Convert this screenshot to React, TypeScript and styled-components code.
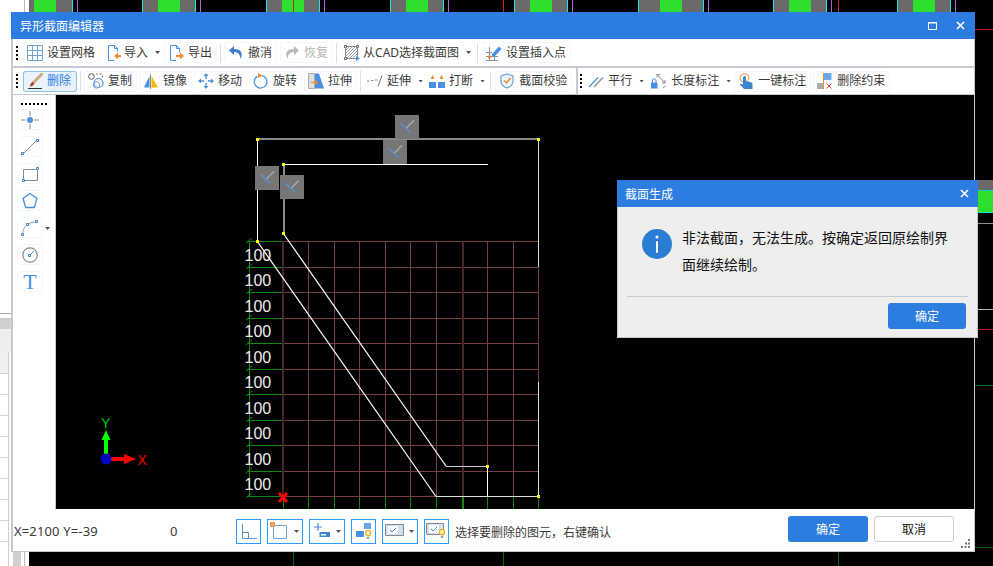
import { FC, ReactNode } from "react";
import styled, { createGlobalStyle } from "styled-components";

const BLUE = "#4a90e2";
const STEEL = "#6ea3d8";
const GREY = "#858d94";
const ORANGE = "#f08a30";

/* ---------- toolbar icons ---------- */

const GridIcon = () => (
  <Glyph viewBox="0 0 16 16">
    <path d="M.5.5h15v15H.5zM5.5.5v15M10.5.5v15M.5 5.5h15M.5 10.5h15" fill="none" stroke={STEEL} />
  </Glyph>
);
const ImportIcon = () => (
  <Glyph viewBox="0 0 16 16">
    <path d="M2.5.5h6l3 3v3M8 15.5H2.5V.5M8.5.5v3h3" fill="none" stroke={BLUE} />
    <path d="M8 11l4-3.5V10h3v2h-3v2.5z" fill={ORANGE} />
  </Glyph>
);
const ExportIcon = () => (
  <Glyph viewBox="0 0 16 16">
    <path d="M2.5.5h6l3 3v4M8 15.5H2.5V.5M8.5.5v3h3" fill="none" stroke={BLUE} />
    <path d="M16 11l-4-3.5V10H8v2h4v2.5z" fill={ORANGE} />
  </Glyph>
);
const UndoIcon = () => (
  <Glyph viewBox="0 0 16 16">
    <path d="M6 1L1 5.5 6 10V7c4 0 6 2 6.5 7C15.5 8 13 4 6 4z" fill="#3f7fc7" />
  </Glyph>
);
const RedoIcon = () => (
  <Glyph viewBox="0 0 16 16">
    <path d="M10 1l5 4.5L10 10V7c-4 0-6 2-6.5 7C.5 8 3 4 10 4z" fill="#b9b9b9" />
  </Glyph>
);
const CadIcon = () => (
  <Glyph viewBox="0 0 16 16">
    <path d="M2 5l3-3M2 8l6-6M2 11l9-9M2 14L14 2M5 14l9-9M8 14l6-6M11 14l3-3" stroke="#9aa0a6" fill="none" />
    <path d="M1.5 1.5h12v12h-12z" fill="none" stroke={GREY} />
    <path d="M.5.5h2v2h-2zM12.5.5h2v2h-2zM.5 12.5h2v2h-2z" fill="#fff" stroke="#5d666e" />
    <path d="M12 11l4 2.5-4 2.5z" fill={BLUE} />
  </Glyph>
);
const InsertIcon = () => (
  <Glyph viewBox="0 0 16 16">
    <path d="M3.5 2v14M8.5 7v9M0 7.5h6M0 11.5h12M0 15.5h12" stroke={GREY} fill="none" />
    <path d="M6 9L13 1.5l2.5 2.5L9 11l-3 1z" fill={BLUE} />
    <circle cx="3.5" cy="12" r="1.7" fill={ORANGE} />
  </Glyph>
);
const BrushIcon = () => (
  <Glyph viewBox="0 0 16 16">
    <path d="M15 1L7.5 8.5" stroke="#d0ab78" strokeWidth="3" strokeLinecap="round" fill="none" />
    <path d="M5.5 8.5l2 2c-.8 2-2.5 3-5 3 1.2-1.5 1-3.5 3-5z" fill="#b5431f" />
    <path d="M1 15.5h14" stroke="#333" fill="none" />
  </Glyph>
);
const CopyIcon = () => (
  <Glyph viewBox="0 0 16 16">
    <circle cx="3.5" cy="3.5" r="2.8" fill="none" stroke="#555" />
    <path d="M8 1h2M11.5 1h2M14.5 2.5v2" stroke="#777" fill="none" />
    <circle cx="10.5" cy="10" r="4.5" fill="none" stroke={BLUE} strokeWidth="1.2" />
    <circle cx="8.5" cy="12" r="3.2" fill="none" stroke={STEEL} />
  </Glyph>
);
const MirrorIcon = () => (
  <Glyph viewBox="0 0 16 16">
    <path d="M1 14.5L6.5 3v11.5z" fill={BLUE} />
    <path d="M7.5 1v15" stroke="#8a8a8a" fill="none" />
    <path d="M8.5 14.5V3L15 14.5z" fill="#f7b500" />
  </Glyph>
);
const MoveIcon = () => (
  <Glyph viewBox="0 0 16 16">
    <path d="M8 0l2.5 3h-5zM8 16l2.5-3h-5zM0 8l3-2.5v5zM16 8l-3-2.5v5z" fill={BLUE} />
    <path d="M8 3v3M8 10v3M3 8h3M10 8h3" stroke={BLUE} strokeWidth="1.4" fill="none" />
  </Glyph>
);
const RotateIcon = () => (
  <Glyph viewBox="0 0 16 16">
    <path d="M9 2.6a6.3 6.3 0 1 1-4.8.8" fill="none" stroke={BLUE} strokeWidth="1.3" />
    <path d="M5 0l4.5 2.5L5 5z" fill={ORANGE} />
  </Glyph>
);
const StretchIcon = () => (
  <Glyph viewBox="0 0 16 16">
    <path d="M.5.5h6v15h-6z" fill="#dde0e3" stroke="#a8adb2" />
    <path d="M7 .5h4l5 15H7z" fill={BLUE} />
    <path d="M3 9.5h6M7 7.5l3 2-3 2z" stroke={ORANGE} fill={ORANGE} />
  </Glyph>
);
const ExtendIcon = () => (
  <Glyph viewBox="0 0 16 16">
    <path d="M0 8h2.5M4 7.5h2.5M8 7h2.5" stroke={GREY} fill="none" />
    <path d="M11 13.5L15 2.5" stroke="#5b7f9f" fill="none" />
  </Glyph>
);
const BreakIcon = () => (
  <Glyph viewBox="0 0 16 16">
    <path d="M0 9h7v6H0zM9 9h7v6H9z" fill={BLUE} />
    <path d="M3.5 2L1.5 6h4zM12.5 2l-2 4h4z" fill={ORANGE} />
  </Glyph>
);
const ShieldIcon = () => (
  <Glyph viewBox="0 0 16 16">
    <path d="M8 1l6 2v5c0 3.5-3 6-6 7-3-1-6-3.5-6-7V3z" fill="#eef5fc" stroke={STEEL} strokeWidth="1.2" />
    <path d="M5 7.5l2.5 2.5L11.5 5" fill="none" stroke={ORANGE} strokeWidth="1.5" />
  </Glyph>
);
const ParallelIcon = () => (
  <Glyph viewBox="0 0 16 16">
    <path d="M1 14L10 4.5" stroke={BLUE} strokeWidth="1.2" fill="none" />
    <path d="M6 14l9-9.5" stroke={GREY} strokeWidth="1.2" fill="none" />
  </Glyph>
);
const LengthIcon = () => (
  <Glyph viewBox="0 0 16 16">
    <path d="M1 9.5h6.5v6H1z" fill={BLUE} />
    <path d="M2.5 9.5V7a1.8 1.8 0 0 1 3.5 0v2.5" fill="none" stroke={BLUE} />
    <path d="M7 1.5l8 8.5M7 1.5h3M7 1.5v3M15 10h-3M15 10V7" fill="none" stroke={GREY} />
    <path d="M13 15l2.5-2" stroke={GREY} fill="none" />
  </Glyph>
);
const HandIcon = () => (
  <Glyph viewBox="0 0 16 16">
    <circle cx="6.5" cy="5" r="4.2" fill="none" stroke="#f2a36b" strokeWidth="1.3" />
    <path d="M5 4.5a1.5 1.5 0 0 1 3 0V8l5 1.2c1 .3 1.5 1 1.5 2V16H6l-4-4.5 1-1 2 1.2z" fill="#3d86cf" />
  </Glyph>
);
const ClearIcon = () => (
  <Glyph viewBox="0 0 16 16">
    <path d="M7 0h7.5v7H7z" fill="#6aa7e8" />
    <path d="M6.5 0v16" stroke={ORANGE} fill="none" />
    <path d="M0 10h6v6H0z" fill="#a9adb2" />
    <path d="M9.5 10.5l5 5M14.5 10.5l-5 5" stroke="#e0453a" fill="none" />
  </Glyph>
);

/* ---------- side panel icons ---------- */

const PointTool = () => (
  <PanelGlyph viewBox="0 0 20 20">
    <path d="M10 1v5M10 14v5M1 10h5M14 10h5" stroke={GREY} fill="none" />
    <circle cx="10" cy="10" r="3" fill={BLUE} />
  </PanelGlyph>
);
const LineTool = () => (
  <PanelGlyph viewBox="0 0 20 20">
    <path d="M3 17L17 3" stroke={GREY} fill="none" />
    <path d="M1.5 15.5h2v2h-2zM16.5 2.5h2v2h-2z" fill="#fff" stroke="#3d86cf" />
  </PanelGlyph>
);
const RectTool = () => (
  <PanelGlyph viewBox="0 0 20 20">
    <path d="M3.5 5.5h14v11h-14z" fill="none" stroke={GREY} />
    <path d="M16.5 3.5h2v2h-2zM2.5 15.5h2v2h-2z" fill="#fff" stroke="#3d86cf" />
  </PanelGlyph>
);
const PentagonTool = () => (
  <PanelGlyph viewBox="0 0 20 20">
    <path d="M10 2.5l7 5-2.7 9H5.7l-2.7-9z" fill="none" stroke={BLUE} strokeWidth="1.3" />
  </PanelGlyph>
);
const ArcTool = () => (
  <PanelGlyph viewBox="0 0 20 20">
    <path d="M2.5 16C3 11 5 8 8 6c3-1.5 5-2 8-2" fill="none" stroke="#9aa0a6" />
    <path d="M1.5 15.5h2v2h-2zM6.5 5.5h2v2h-2zM15.5 2.5h2v2h-2z" fill="#fff" stroke="#3d86cf" />
  </PanelGlyph>
);
const CircleTool = () => (
  <PanelGlyph viewBox="0 0 20 20">
    <circle cx="10" cy="10" r="7.2" fill="none" stroke={GREY} strokeWidth="1.2" />
    <path d="M10 10l4-4" stroke={BLUE} fill="none" />
    <path d="M8.5 9.5h2v2h-2z" fill="#fff" stroke="#3d86cf" />
  </PanelGlyph>
);

/* ---------- status bar icons ---------- */

const Bulb = ({ x, y }: { x: number; y: number }) => (
  <g transform={`translate(${x} ${y})`}>
    <circle cx="3" cy="3" r="2.6" fill="#fff3b0" stroke="#e0b020" strokeWidth="1.2" />
    <path d="M1.8 6.5h2.4V9H1.8z" fill="#9aa0a6" />
  </g>
);
const OrthoIcon = () => (
  <StatusGlyph viewBox="0 0 23 23">
    <path d="M5.5 4v14.5H20M5.5 12.5h6v6" fill="none" stroke="#5b8fc4" />
  </StatusGlyph>
);
const SnapIcon = () => (
  <StatusGlyph viewBox="0 0 23 23">
    <path d="M5.5 5.5h13v13h-13z" fill="none" stroke={STEEL} />
    <path d="M2.5 2.5h4v4h-4z" fill="#f5a869" stroke="#e98c3c" />
  </StatusGlyph>
);
const PlusIcon = () => (
  <StatusGlyph viewBox="0 0 23 23">
    <path d="M8 3v8M4 7h8" stroke={BLUE} strokeWidth="1.2" fill="none" />
    <path d="M9.5 12H20v5H9.5z" fill="#3d86cf" />
    <path d="M11 14h5v1.5h-5z" fill="#fff" />
  </StatusGlyph>
);
const FlagIcon = () => (
  <StatusGlyph viewBox="0 0 23 23">
    <path d="M12 3h7v6h-7z" fill="#6aa7e8" />
    <path d="M4 11h8V3v14H4z" fill={BLUE} />
    <Bulb x={13} y={10} />
  </StatusGlyph>
);
const CardIcon = () => (
  <StatusGlyph viewBox="0 0 23 23">
    <path d="M2.5 4.5h18v11h-18z" fill="#cfe0f4" stroke={GREY} />
    <path d="M5 6h10v8H5z" fill="#fff" />
    <path d="M7 10l2 2 4-4" fill="none" stroke="#3d86cf" />
  </StatusGlyph>
);
const CardBulbIcon = () => (
  <StatusGlyph viewBox="0 0 23 23">
    <path d="M1.5 3.5h17v11h-17z" fill="#cfe0f4" stroke={GREY} />
    <path d="M4 5h10v8H4z" fill="#fff" />
    <path d="M6 9l2 2 4-4" fill="none" stroke="#3d86cf" />
    <Bulb x={14} y={9} />
  </StatusGlyph>
);

/* ---------- data ---------- */

type Item =
  | { sep: true; ml?: number; mr?: number }
  | { label: string; icon: ReactNode; caret?: boolean; active?: boolean; muted?: boolean; gap?: number; mr?: number };

const topTools: Item[] = [
  { label: "设置网格", icon: <GridIcon /> },
  { label: "导入", icon: <ImportIcon />, caret: true, gap: 2 },
  { label: "导出", icon: <ExportIcon /> },
  { sep: true, ml: 1, mr: 1 },
  { label: "撤消", icon: <UndoIcon />, mr: 1 },
  { label: "恢复", icon: <RedoIcon />, muted: true },
  { sep: true, ml: 1, mr: 1 },
  { label: "从CAD选择截面图", icon: <CadIcon />, caret: true, gap: 3 },
  { sep: true, ml: 2, mr: 2 },
  { label: "设置插入点", icon: <InsertIcon /> },
];

const editTools: Item[] = [
  { label: "删除", icon: <BrushIcon />, active: true },
  { sep: true, ml: 1, mr: 1 },
  { label: "复制", icon: <CopyIcon /> },
  { label: "镜像", icon: <MirrorIcon /> },
  { label: "移动", icon: <MoveIcon /> },
  { label: "旋转", icon: <RotateIcon /> },
  { label: "拉伸", icon: <StretchIcon /> },
  { sep: true, ml: 1 },
  { label: "延伸", icon: <ExtendIcon />, caret: true, mr: -2 },
  { label: "打断", icon: <BreakIcon />, caret: true },
  { sep: true, ml: 1, mr: 2 },
  { label: "截面校验", icon: <ShieldIcon /> },
];

const constraintTools: Item[] = [
  { label: "平行", icon: <ParallelIcon />, caret: true, mr: -2 },
  { label: "长度标注", icon: <LengthIcon />, caret: true, gap: 5, mr: -1 },
  { label: "一键标注", icon: <HandIcon /> },
  { label: "删除约束", icon: <ClearIcon /> },
];

const gridX = [283, 308, 334, 359, 385, 410, 436, 462, 487, 513, 538];
const gridY = [241, 267, 292, 318, 343, 369, 394, 420, 445, 471, 496];
const labelY = [261, 286, 312, 337, 363, 388, 414, 439, 465, 490];
const vertices = [
  [257, 139],
  [538, 139],
  [283, 164],
  [283, 233],
  [257, 241],
  [487, 466],
  [538, 496],
];
const badges = [
  [395, 115],
  [383, 140],
  [255, 166],
  [280, 175],
];
// cyan start of each stripe block behind the window, and its grey width
const stripes = [
  [142, 16],
  [266, 16],
  [390, 16],
  [514, 16],
  [638, 22],
  [773, 16],
  [897, 16],
];

const ToolRow: FC<{ items: Item[] }> = ({ items }) => (
  <>
    {items.map((item, i) =>
      "sep" in item ? (
        <Separator key={i} $ml={item.ml} $mr={item.mr} />
      ) : (
        <ToolButton key={i} $active={item.active} $muted={item.muted} $gap={item.gap} $mr={item.mr} $caret={item.caret}>
          {item.icon}
          <span>{item.label}</span>
          {item.caret && <Caret $ml={7 - (item.gap ?? 4)} />}
        </ToolButton>
      ),
    )}
  </>
);

const Backdrop = () => (
  <BackdropArt viewBox="0 0 993 566">
    <rect x="0" y="0" width="29" height="566" fill="#fff" />
    <path d="M24.5 0v12M24.5 552v14" stroke="#bbb" />
    <rect x="0" y="313" width="11" height="1" fill="#aaa" />
    <rect x="0" y="318" width="11" height="11" fill="#d0d0d0" />
    <rect x="0" y="329" width="11" height="23" fill="#eee" />
    <rect x="0" y="352" width="8" height="21" fill="#f0f0f0" />
    <path d="M8.5 352v214" stroke="#ccc" />
    {[373, 394, 415, 436, 457, 478, 499, 520, 541].map((y) => (
      <rect key={y} x="0" y={y} width="8" height="1" fill="#d4d4d4" />
    ))}
    <rect x="13" y="552" width="8" height="14" fill="#cfcfcf" />
    {stripes.map(([x, w]) => (
      <g key={x}>
        <rect x={x} y="0" width="1" height="12" fill="#19e6e6" />
        <rect x={x + 1} y="0" width={w - 1} height="12" fill="#6a6a6a" />
        <rect x={x + w} y="0" width="22" height="12" fill="#2ce02c" />
        <rect x={x + w + 22} y="0" width={w - 1} height="12" fill="#6a6a6a" />
        <rect x={x + w * 2 + 21} y="0" width="1" height="12" fill="#19e6e6" />
        <rect x={x + w * 2 + 26} y="0" width="1" height="12" fill="#b060d0" />
      </g>
    ))}
    <rect x="29" y="0" width="5" height="12" fill="#6a6a6a" />
    <rect x="34" y="0" width="22" height="12" fill="#2ce02c" />
    <rect x="56" y="0" width="16" height="12" fill="#6a6a6a" />
    <rect x="72" y="0" width="1" height="12" fill="#19e6e6" />
    <rect x="77" y="0" width="1" height="12" fill="#b060d0" />
    <rect x="293" y="0" width="1" height="12" fill="#d02020" />
    <rect x="503" y="0" width="1" height="12" fill="#d02020" />
    <rect x="838" y="0" width="1" height="12" fill="#d02020" />
    <rect x="975" y="29" width="18" height="1" fill="#c01818" />
    <rect x="978" y="180" width="15" height="11" fill="#6a6a6a" />
    <rect x="978" y="190" width="15" height="1" fill="#19c8c8" />
    <rect x="978" y="191" width="15" height="21" fill="#2ce02c" />
    <rect x="978" y="212" width="15" height="1" fill="#19e6e6" />
    <rect x="978" y="223" width="15" height="1" fill="#8a8a8a" />
    <rect x="978" y="309" width="15" height="1" fill="#b0b0b0" />
    <rect x="978" y="329" width="15" height="1" fill="#c01818" />
    <rect x="975" y="385" width="18" height="1" fill="#0a6a0a" />
    <rect x="975" y="547" width="18" height="1" fill="#0a6a0a" />
    {[293, 503, 838].map((x) => (
      <rect key={x} x={x} y="552" width="1" height="14" fill="#0a6a0a" />
    ))}
  </BackdropArt>
);

const CadDrawing = () => (
  <CadCanvas viewBox="56 95 918 414" shapeRendering="crispEdges">
    {gridY.map((y) => (
      <g key={y}>
        <rect x="283" y={y} width="255" height="1" fill="#773c40" />
        <rect x="247" y={y} width="36" height="1" fill="#0f8a0f" />
        <path d={`M246 ${y + 2}l6-5`} stroke="#0f8a0f" fill="none" shapeRendering="auto" />
      </g>
    ))}
    {gridX.map((x, i) => (
      <g key={x}>
        <rect x={i === 0 ? x - 1 : x} y="241" width={i === 0 || i === 7 ? 2 : 1} height="255" fill={i === 0 || i === 7 ? "#4b2528" : "#773c40"} />
        <rect x={x} y="497" width={i === 7 ? 2 : 1} height="12" fill="#0f8a0f" />
      </g>
    ))}
    <rect x="249" y="241" width="1" height="255" fill="#0f8a0f" />

    <rect x="257" y="138" width="281" height="2" fill="#8a8a8a" />
    <rect x="257" y="139" width="1" height="102" fill="#fff" />
    <rect x="538" y="139" width="1" height="128" fill="#d8d8d8" />
    <rect x="538" y="382" width="1" height="114" fill="#d8d8d8" />
    <rect x="436" y="496" width="102" height="1" fill="#dcdcdc" />
    <rect x="283" y="164" width="205" height="1" fill="#fff" />
    <rect x="283" y="164" width="2" height="69" fill="#8a8a8a" />
    <rect x="446" y="466" width="41" height="1" fill="#d0d0d0" />
    <rect x="487" y="466" width="1" height="30" fill="#fff" />
    <path d="M257 241L436 496.5M283 233L446 466" stroke="#f2f2f2" strokeWidth="1.3" fill="none" shapeRendering="auto" />

    {labelY.map((y) => (
      <Dimension key={y} x="244.5" y={y}>
        100
      </Dimension>
    ))}

    {badges.map(([x, y]) => (
      <g key={`${x}-${y}`} transform={`translate(${x} ${y})`} shapeRendering="auto">
        <rect width="24" height="24" fill="#767676" />
        <path d="M11.3 13.3L19 5.3" stroke="#a9a9a9" strokeWidth="1.3" fill="none" />
        <path d="M5.7 8.3l9.3 9" stroke="#5a93d6" strokeWidth="1.5" fill="none" />
      </g>
    ))}
    {vertices.map(([x, y]) => (
      <rect key={`${x}-${y}`} x={x - 1} y={y - 1} width="3" height="3" fill="#ffff00" />
    ))}

    <g shapeRendering="auto">
      <path d="M279 493l8 9M287 493l-8 9" stroke="#ff0000" strokeWidth="3" fill="none" />
      <path d="M104 455v-15h-2.5l4.5-10 4.5 10H108v15z" fill="#00ff00" />
      <path d="M110 457h14v-3l12 5-12 5v-3h-14z" fill="#ff0000" />
      <circle cx="106" cy="459" r="5.5" fill="#0000c0" />
    </g>
    <AxisLabel x="101" y="428" fill="#00d000">
      Y
    </AxisLabel>
    <AxisLabel x="137.5" y="465" fill="#ff0000">
      X
    </AxisLabel>
  </CadCanvas>
);

const App: FC = () => {
  return (
    <Desktop>
      <GlobalStyle />
      <Backdrop />

      <EditorWindow>
        <TitleBar>
          <span>异形截面编辑器</span>
          <WindowButtons>
            <svg width="9" height="8" viewBox="0 0 9 8">
              <path d="M.5 1h8v6.5h-8z" fill="none" stroke="#fff" />
              <path d="M0 .5h9" stroke="#fff" />
            </svg>
            <svg width="9" height="9" viewBox="0 0 9 9">
              <path d="M1 1l7 7M8 1L1 8" stroke="#fff" strokeWidth="1.6" />
            </svg>
          </WindowButtons>
        </TitleBar>

        <Frame>
          <TopToolbar>
            <Grip />
            <ToolRow items={topTools} />
          </TopToolbar>
          <EditToolbar>
            <Grip />
            <ToolRow items={editTools} />
            <ToolbarBreak />
            <InnerGrip />
            <ToolRow items={constraintTools} />
          </EditToolbar>

          <Workspace>
            <SidePanel>
              <PanelGrip />
              <PanelTool><PointTool /></PanelTool>
              <PanelTool><LineTool /></PanelTool>
              <PanelTool><RectTool /></PanelTool>
              <PanelTool><PentagonTool /></PanelTool>
              <PanelTool>
                <ArcTool />
                <PanelCaret />
              </PanelTool>
              <PanelTool><CircleTool /></PanelTool>
              <PanelTool><TextTool>T</TextTool></PanelTool>
            </SidePanel>
            <CadDrawing />
          </Workspace>

          <StatusBar>
            <Coords>X=2100 Y=-39</Coords>
            <AngleValue>0</AngleValue>
            <SnapGroup>
              <SnapButton><OrthoIcon /></SnapButton>
              <SnapButton $caret><SnapIcon /><Caret /></SnapButton>
              <SnapButton $caret><PlusIcon /><Caret /></SnapButton>
              <SnapButton><FlagIcon /></SnapButton>
              <SnapButton $caret><CardIcon /><Caret /></SnapButton>
              <SnapButton><CardBulbIcon /></SnapButton>
            </SnapGroup>
            <Hint>选择要删除的图元，右键确认</Hint>
            <Actions>
              <PrimaryButton>确定</PrimaryButton>
              <PlainButton>取消</PlainButton>
            </Actions>
            <ResizeGrip viewBox="0 0 10 9" width="10" height="9">
              <path d="M7 0h2v2H7zM4 3.5h2v2H4zM7 3.5h2v2H7zM0 7h2v2H0zM3.5 7h2v2h-2zM7 7h2v2H7z" fill="#777" />
            </ResizeGrip>
          </StatusBar>
        </Frame>
      </EditorWindow>

      <MessageDialog>
        <DialogTitle>
          <span>截面生成</span>
          <svg width="9" height="9" viewBox="0 0 9 9">
            <path d="M1 1l7 7M8 1L1 8" stroke="#fff" strokeWidth="1.6" />
          </svg>
        </DialogTitle>
        <DialogBody>
          <InfoBadge>
            <svg width="4" height="18" viewBox="0 0 4 18">
              <circle cx="2" cy="2" r="1.5" fill="#fff" />
              <rect x="1" y="6" width="2" height="12" rx="1" fill="#fff" />
            </svg>
          </InfoBadge>
          <Message>非法截面，无法生成。按确定返回原绘制界面继续绘制。</Message>
        </DialogBody>
        <DialogFooter>
          <DialogButton>确定</DialogButton>
        </DialogFooter>
      </MessageDialog>
    </Desktop>
  );
};

export default App;

const GlobalStyle = createGlobalStyle`
  html, body {
    margin: 0;
    height: 100%;
    background: #000;
    overflow: hidden;
  }
  * {
    box-sizing: border-box;
  }
`;

const Desktop = styled.div`
  position: relative;
  width: 993px;
  height: 566px;
  background: #000;
  overflow: hidden;
  font-family: "Noto Sans", "Noto Sans CJK SC", sans-serif;
  font-size: 12px;
  color: #3a3a3a;
`;

const BackdropArt = styled.svg`
  position: absolute;
  inset: 0;
  width: 993px;
  height: 566px;
`;

const EditorWindow = styled.section`
  position: absolute;
  left: 11px;
  top: 12px;
  width: 964px;
  height: 540px;
  display: flex;
  flex-direction: column;
`;

const TitleBar = styled.header`
  height: 27px;
  flex: none;
  display: flex;
  align-items: center;
  justify-content: space-between;
  padding: 0 10px 0 9px;
  background: #2d7de0;
  color: #fff;
  font-size: 12px;
`;

const WindowButtons = styled.div`
  display: flex;
  align-items: center;
  gap: 19px;
`;

const Frame = styled.div`
  flex: 1;
  min-height: 0;
  display: flex;
  flex-direction: column;
  border-left: 2px solid #c5c9d3;
  border-right: 1px solid #c5c9d3;
  border-bottom: 1px solid #c5c9d3;
  background: #fff;
`;

const Toolbar = styled.div`
  flex: none;
  display: flex;
  align-items: center;
  gap: 2px;
  padding-left: 3px;
  background: #fff;
`;

const TopToolbar = styled(Toolbar)`
  height: 29px;
  border-bottom: 2px solid #c5c9d3;
`;

const EditToolbar = styled(Toolbar)`
  height: 27px;
  border-bottom: 1px solid #c5c9d3;
`;

const Grip = styled.i`
  flex: none;
  width: 2px;
  height: 14px;
  margin-right: 3px;
  background: repeating-linear-gradient(to bottom, #000 0 2px, transparent 2px 4px);
`;

const InnerGrip = styled(Grip)`
  margin-right: 0;
`;

const ToolbarBreak = styled.i`
  flex: none;
  align-self: stretch;
  width: 2px;
  margin-left: 2px;
  background: #c5c9d3;
`;

const Separator = styled.i<{ $ml?: number; $mr?: number }>`
  flex: none;
  width: 1px;
  height: 20px;
  margin-left: ${(p) => p.$ml ?? 0}px;
  margin-right: ${(p) => p.$mr ?? 0}px;
  background: #dcdfe4;
`;

const buttonPadding = (p: { $active?: boolean; $caret?: boolean }) => {
  if (p.$active) return 6;
  return p.$caret ? 2 : 5;
};

const ToolButton = styled.div<{ $active?: boolean; $muted?: boolean; $gap?: number; $mr?: number; $caret?: boolean }>`
  flex: none;
  height: 21px;
  display: flex;
  align-items: center;
  gap: ${(p) => p.$gap ?? 4}px;
  padding: 0 ${buttonPadding}px 0 4px;
  margin-right: ${(p) => p.$mr ?? 0}px;
  border-radius: 3px;
  box-shadow: inset 0 0 0 1px ${(p) => (p.$active ? "#8fc0ee" : p.$caret ? "transparent" : "#f6f6f6")};
  background: ${(p) => (p.$active ? "#e8f2fc" : "#fff")};
  color: ${(p) => (p.$active ? "#2d7de0" : p.$muted ? "#b5b5b5" : "#3a3a3a")};
  line-height: 1;
  white-space: nowrap;
`;

const Glyph = styled.svg`
  flex: none;
  width: 16px;
  height: 16px;
`;

const Caret = styled.i<{ $ml?: number }>`
  flex: none;
  width: 5px;
  height: 3px;
  margin-left: ${(p) => p.$ml ?? 3}px;
  background: #555;
  clip-path: polygon(0 0, 100% 0, 50% 100%);
`;

const Workspace = styled.div`
  flex: 1;
  min-height: 0;
  display: flex;
`;

const SidePanel = styled.aside`
  flex: none;
  width: 43px;
  display: flex;
  flex-direction: column;
  align-items: flex-start;
  gap: 6px;
  padding: 8px 0 0 4px;
  background: #fff;
  border-right: 1px solid #c5c9d3;
`;

const PanelGrip = styled.i`
  width: 26px;
  height: 2px;
  margin: 0 0 -2px 4px;
  background: repeating-linear-gradient(to right, #000 0 2px, transparent 2px 4px);
`;

const PanelTool = styled.div`
  position: relative;
  width: 26px;
  height: 21px;
  display: flex;
  align-items: center;
  justify-content: center;
  border: 1px solid #f6f6f6;
  border-radius: 3px;
`;

const PanelGlyph = styled.svg`
  width: 20px;
  height: 20px;
`;

const PanelCaret = styled(Caret)`
  position: absolute;
  left: 27px;
  top: 9px;
  margin: 0;
`;

const TextTool = styled.span`
  font-family: "Liberation Serif", serif;
  font-size: 22px;
  line-height: 1;
  color: ${BLUE};
`;

const CadCanvas = styled.svg`
  flex: 1;
  min-width: 0;
  width: 918px;
  height: 414px;
  background: #000;
`;

const Dimension = styled.text`
  font-family: "Liberation Sans", sans-serif;
  font-size: 16px;
  fill: #ececec;
  shape-rendering: auto;
`;

const AxisLabel = styled.text`
  font-family: "Liberation Sans", sans-serif;
  font-size: 14px;
`;

const StatusBar = styled.footer`
  position: relative;
  flex: none;
  height: 41px;
  display: flex;
  align-items: center;
  background: #fff;
`;

const Coords = styled.span`
  flex: none;
  width: 157px;
  margin-top: 1px;
  padding-left: 1px;
  font-size: 13px;
  letter-spacing: 0.15px;
  white-space: nowrap;
`;

const AngleValue = styled.span`
  flex: none;
  width: 66px;
  margin-top: 1px;
  font-size: 13px;
`;

const SnapGroup = styled.div`
  display: flex;
  gap: 6px;
  margin-top: 2px;
`;

const SnapButton = styled.div<{ $caret?: boolean }>`
  width: ${(p) => (p.$caret ? 36 : 25)}px;
  height: 25px;
  display: flex;
  align-items: center;
  border: 1px solid #2e9bff;
  background: #fff;
`;

const StatusGlyph = styled.svg`
  flex: none;
  width: 23px;
  height: 23px;
`;

const Hint = styled.span`
  margin-left: 6px;
  margin-top: 2px;
  white-space: nowrap;
`;

const Actions = styled.div`
  margin-left: auto;
  margin-right: 20px;
  margin-bottom: 3px;
  display: flex;
  gap: 6px;
`;

const PrimaryButton = styled.div`
  width: 80px;
  height: 26px;
  display: flex;
  align-items: center;
  justify-content: center;
  border-radius: 3px;
  background: #2d7de0;
  color: #fff;
`;

const PlainButton = styled(PrimaryButton)`
  background: #fff;
  border: 1px solid #cccccc;
  color: #111;
`;

const ResizeGrip = styled.svg`
  position: absolute;
  right: 3px;
  bottom: 3px;
`;

const MessageDialog = styled.section`
  position: absolute;
  left: 617px;
  top: 180px;
  width: 361px;
  height: 158px;
  display: flex;
  flex-direction: column;
  background: #eeeeee;
  border: 1px solid #c5c9d3;
  border-top: 0;
`;

const DialogTitle = styled.header`
  flex: none;
  height: 27px;
  display: flex;
  align-items: center;
  justify-content: space-between;
  margin: 0 -1px;
  padding: 0 9px 0 8px;
  background: #2d7de0;
  color: #fff;
`;

const DialogBody = styled.div`
  flex: none;
  height: 90px;
  display: flex;
  align-items: flex-start;
  gap: 10px;
  margin: 0 9px;
  padding: 22px 0 0 15px;
  border-bottom: 1px solid #c5c9d3;
`;

const InfoBadge = styled.div`
  flex: none;
  width: 30px;
  height: 30px;
  display: flex;
  align-items: center;
  justify-content: center;
  border-radius: 50%;
  background: #2b7cd3;
`;

const Message = styled.p`
  width: 270px;
  margin: -5px 0 0;
  font-size: 14px;
  line-height: 27px;
  color: #111;
`;

const DialogFooter = styled.div`
  display: flex;
  justify-content: flex-end;
  padding: 6px 11px 0 0;
`;

const DialogButton = styled(PrimaryButton)`
  width: 78px;
`;
